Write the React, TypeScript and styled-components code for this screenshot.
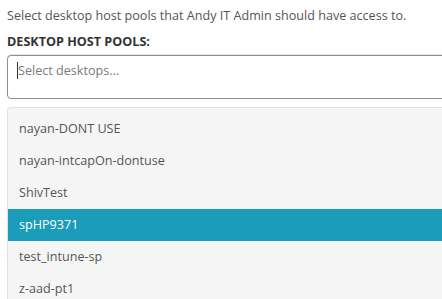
import styled, { createGlobalStyle } from 'styled-components';

const GlobalStyle = createGlobalStyle`
  html, body {
    margin: 0;
    padding: 0;
    background: #ffffff;
    overflow: hidden;
  }
  body {
    font-family: "Open Sans", "Liberation Sans", sans-serif;
  }
`;

const Page = styled.div`
  padding: 6px 0 0 7px;
  width: 480px;
`;

const Intro = styled.p`
  margin: 0;
  font-size: 12.6px;
  line-height: 20px;
  color: #555555;
`;

const Label = styled.div`
  margin-top: 6px;
  font-size: 12.6px;
  line-height: 20px;
  font-weight: 700;
  color: #333333;
`;

const InputBox = styled.div`
  margin-top: 3px;
  height: 44px;
  border: 1px solid #8f8f8f;
  border-radius: 4px;
  box-shadow: 0 -1px 0 #e6e6e6;
  background: #ffffff;
  padding: 2px 9px;
  box-sizing: border-box;
`;

const Placeholder = styled.span`
  font-size: 12.6px;
  line-height: 20px;
  color: #7a7a7a;
  border-left: 1px solid #333;
`;

const Menu = styled.ul`
  list-style: none;
  margin: 8px 0 0;
  padding: 5px 0 0;
  background: #f5f5f5;
  border: 1px solid #e0e0e0;
  border-right: none;
  border-radius: 4px 0 0 0;
`;

const Option = styled.li<{ $active?: boolean }>`
  height: 32px;
  line-height: 32px;
  padding-left: 11px;
  font-size: 12.6px;
  color: ${p => (p.$active ? '#ffffff' : '#555555')};
  background: ${p => (p.$active ? '#1b9cba' : 'transparent')};
`;

const options = [
  'nayan-DONT USE',
  'nayan-intcapOn-dontuse',
  'ShivTest',
  'spHP9371',
  'test_intune-sp',
  'z-aad-pt1',
];

export default function App() {
  return (
    <>
      <GlobalStyle />
      <Page>
        <Intro>Select desktop host pools that Andy IT Admin should have access to.</Intro>
        <Label>DESKTOP HOST POOLS:</Label>
        <InputBox>
          <Placeholder>Select desktops...</Placeholder>
        </InputBox>
        <Menu>
          {options.map(o => (
            <Option key={o} $active={o === 'spHP9371'}>{o}</Option>
          ))}
        </Menu>
      </Page>
    </>
  );
}
